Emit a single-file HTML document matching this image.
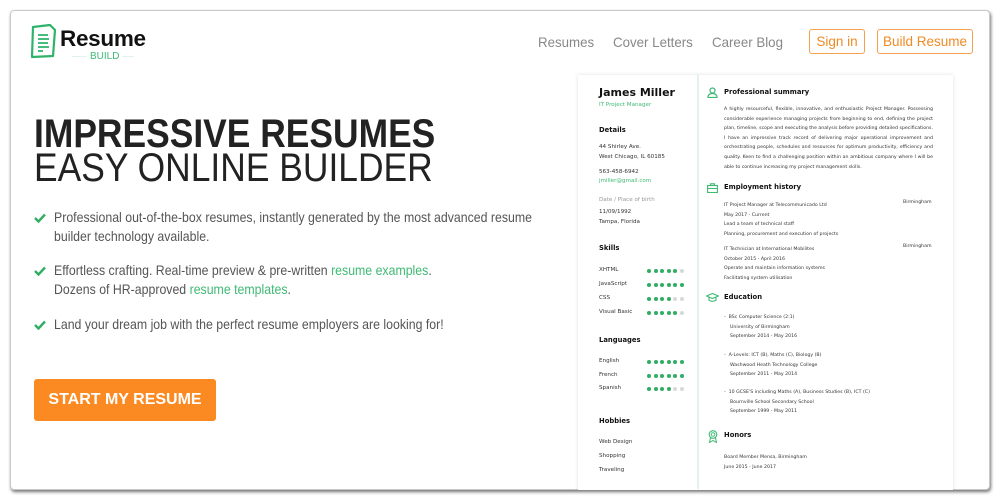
<!DOCTYPE html>
<html><head><meta charset="utf-8"><style>
*{margin:0;padding:0;box-sizing:border-box}
body{width:1000px;height:500px;background:#fff;position:relative;overflow:hidden;font-family:"Liberation Sans",sans-serif}
.card{position:absolute;left:10px;top:10px;width:980px;height:480px;border:1px solid #c8c8c8;border-radius:4px;box-shadow:1px 2px 3px rgba(0,0,0,.55);background:#fff;overflow:hidden}
.a{position:absolute;white-space:nowrap}
.nav{font-size:14px;color:#888;top:34px;transform:scaleX(.95);transform-origin:left}
.btn{position:absolute;border:1px solid #f5a04c;border-radius:3px;color:#f08a24;font-size:13.5px;text-align:center;line-height:23px;top:29px;height:25px}
.h{font-size:40px;color:#222;left:34px;transform:scaleX(.885);transform-origin:left}
.li{font-size:14px;color:#555;left:54px;line-height:19px;transform:scaleX(.88);transform-origin:left}
.li a{color:#3fba74;text-decoration:none}
.ck{position:absolute;left:34px;width:12px;height:10px}
.res{position:absolute;left:568px;top:65px;width:395px;height:425px;overflow:hidden}
.res .p{position:absolute;left:10px;top:10px;width:375px;height:430px;background:#fff;box-shadow:0 0 4px rgba(0,0,0,.12)}
.r{position:absolute;white-space:nowrap;font-family:"DejaVu Sans","Liberation Sans",sans-serif;color:#333;line-height:1}
.s{font-size:4.7px}
.m{font-size:5.6px}
.hd{font-size:6.8px;font-weight:bold;color:#111}
.g{color:#3fba74}
.dots{position:absolute;left:647px;display:flex;gap:2.5px}
.dots i{width:4px;height:4px;border-radius:50%;background:#2fae63;display:block}
.dots i.o{background:#d8d8d8}
</style></head><body>
<div class="card"></div>
<svg class="a" style="left:28px;top:23px" width="30" height="36" viewBox="0 0 30 36"><path d="M5 4 L22 2 L27 7 L25 33 L4 34 Z" fill="none" stroke="#2fb36a" stroke-width="2.2" stroke-linejoin="round"/><path d="M10 12h10M10 16h11M10 20h10M10 24h11M10 28h5" stroke="#2fb36a" stroke-width="1.8"/></svg>
<div class="a" style="left:60px;top:26px;font-size:22.5px;font-weight:bold;color:#111;letter-spacing:-.3px">Resume</div>
<div class="a" style="left:72px;top:56px;width:62px;border-top:1px solid #e3f3ea"></div>
<div class="a" style="left:87px;top:51px;font-size:10px;color:#3fba74;background:#fff;padding:0 3px">BUILD</div>
<div class="a nav" style="left:538px">Resumes</div>
<div class="a nav" style="left:613px">Cover Letters</div>
<div class="a nav" style="left:712px">Career Blog</div>
<div class="btn" style="left:809px;width:56px">Sign in</div>
<div class="btn" style="left:877px;width:96px">Build Resume</div>
<div class="a h" style="top:112px;font-weight:bold">IMPRESSIVE RESUMES</div>
<div class="a h" style="top:146px">EASY ONLINE BUILDER</div>
<svg class="ck" style="top:213px" viewBox="0 0 12 10"><path d="M1 5l3.5 3.5L11 1.5" fill="none" stroke="#2fae63" stroke-width="2.4"/></svg>
<div class="a li" style="top:208px">Professional out-of-the-box resumes, instantly generated by the most advanced resume<br>builder technology available.</div>
<svg class="ck" style="top:266px" viewBox="0 0 12 10"><path d="M1 5l3.5 3.5L11 1.5" fill="none" stroke="#2fae63" stroke-width="2.4"/></svg>
<div class="a li" style="top:261px">Effortless crafting. Real-time preview &amp; pre-written <a>resume examples</a>.<br>Dozens of HR-approved <a>resume templates</a>.</div>
<svg class="ck" style="top:320px" viewBox="0 0 12 10"><path d="M1 5l3.5 3.5L11 1.5" fill="none" stroke="#2fae63" stroke-width="2.4"/></svg>
<div class="a li" style="top:315px">Land your dream job with the perfect resume employers are looking for!</div>
<div class="a" style="left:34px;top:379px;width:182px;height:42px;background:#fa8a21;border-radius:3px;color:#fff;font-weight:bold;font-size:16px;text-align:center;line-height:42px">START MY RESUME</div>

<div class="res"><div class="p"></div></div>
<div class="a" style="left:697px;top:75px;width:1.5px;height:414px;background:#e2f3e9"></div>
<div class="r" style="left:599px;top:87px;font-size:11px;font-weight:bold;color:#111">James Miller</div>
<div class="r m g" style="left:599px;top:103px">IT Project Manager</div>
<div class="r hd" style="left:599px;top:127px">Details</div>
<div class="r m" style="left:599px;top:142px;line-height:10px">44 Shirley Ave.<br>West Chicago, IL 60185</div>
<div class="r m" style="left:599px;top:170px">563-458-6942</div>
<div class="r m g" style="left:599px;top:179px">jmiller@gmail.com</div>
<div class="r m" style="left:599px;top:198px;color:#999">Date / Place of birth</div>
<div class="r m" style="left:599px;top:207px;line-height:10px">11/09/1992<br>Tampa, Florida</div>
<div class="r hd" style="left:599px;top:245px">Skills</div>
<div class="r m" style="left:599px;top:268px">XHTML</div><div class="dots" style="top:269px"><i></i><i></i><i></i><i></i><i></i><i class="o"></i></div>
<div class="r m" style="left:599px;top:282px">JavaScript</div><div class="dots" style="top:283px"><i></i><i></i><i></i><i></i><i></i><i></i></div>
<div class="r m" style="left:599px;top:296px">CSS</div><div class="dots" style="top:297px"><i></i><i></i><i></i><i></i><i class="o"></i><i class="o"></i></div>
<div class="r m" style="left:599px;top:310px">Visual Basic</div><div class="dots" style="top:311px"><i></i><i></i><i></i><i></i><i></i><i class="o"></i></div>
<div class="r hd" style="left:599px;top:337px">Languages</div>
<div class="r m" style="left:599px;top:359px">English</div><div class="dots" style="top:360px"><i></i><i></i><i></i><i></i><i></i><i></i></div>
<div class="r m" style="left:599px;top:373px">French</div><div class="dots" style="top:374px"><i></i><i></i><i></i><i></i><i></i><i></i></div>
<div class="r m" style="left:599px;top:386px">Spanish</div><div class="dots" style="top:387px"><i></i><i></i><i></i><i></i><i class="o"></i><i class="o"></i></div>
<div class="r hd" style="left:599px;top:418px">Hobbies</div>
<div class="r m" style="left:599px;top:435px;line-height:14px">Web Design<br>Shopping<br>Traveling</div>

<svg class="a" style="left:707px;top:87px" width="11" height="11" viewBox="0 0 11 11"><circle cx="5.5" cy="3.5" r="2.5" fill="none" stroke="#3fba74" stroke-width="1.2"/><path d="M1 10.5c0-3 2-4 4.5-4s4.5 1 4.5 4z" fill="none" stroke="#3fba74" stroke-width="1.2"/></svg>
<div class="r hd" style="left:724px;top:89px">Professional summary</div>
<div class="r s" style="left:724px;top:105px;width:209px;white-space:normal;line-height:9.6px;text-align:justify">A highly resourceful, flexible, innovative, and enthusiastic Project Manager. Possessing considerable experience managing projects from beginning to end, defining the project plan, timeline, scope and executing the analysis before providing detailed specifications. I have an impressive track record of delivering major operational improvement and orchestrating people, schedules and resources for optimum productivity, efficiency and quality. Keen to find a challenging position within an ambitious company where I will be able to continue increasing my project management skills.</div>
<svg class="a" style="left:707px;top:183px" width="11" height="10" viewBox="0 0 11 10"><rect x=".6" y="2.5" width="9.8" height="7" fill="none" stroke="#3fba74" stroke-width="1.1"/><path d="M3.5 2.5V.8h4v1.7M.6 5.5h9.8" fill="none" stroke="#3fba74" stroke-width="1.1"/></svg>
<div class="r hd" style="left:724px;top:184px">Employment history</div>
<div class="r s" style="left:724px;top:201px;line-height:9.5px">IT Project Manager at Telecommunicado Ltd<br>May 2017 - Current<br>Lead a team of technical staff<br>Planning, procurement and execution of projects</div>
<div class="r s" style="left:903px;top:201px">Birmingham</div>
<div class="r s" style="left:724px;top:245px;line-height:9.5px">IT Technician at International Mobilites<br>October 2015 - April 2016<br>Operate and maintain information systems<br>Facilitating system utilisation</div>
<div class="r s" style="left:903px;top:245px">Birmingham</div>
<svg class="a" style="left:706px;top:293px" width="13" height="9" viewBox="0 0 13 9"><path d="M.5 3L6.5.5 12.5 3 6.5 5.5z M3 4.2v3c2 1.5 5 1.5 7 0v-3" fill="none" stroke="#3fba74" stroke-width="1.1"/></svg>
<div class="r hd" style="left:724px;top:294px">Education</div>
<div class="r s" style="left:724px;top:313px;line-height:9.5px">-&nbsp; BSc Computer Science (2:1)<br>&nbsp;&nbsp;&nbsp; University of Birmingham<br>&nbsp;&nbsp;&nbsp; September 2014 - May 2016</div>
<div class="r s" style="left:724px;top:351px;line-height:9.5px">-&nbsp; A-Levels: ICT (B), Maths (C), Biology (B)<br>&nbsp;&nbsp;&nbsp; Washwood Heath Technology College<br>&nbsp;&nbsp;&nbsp; September 2011 - May 2014</div>
<div class="r s" style="left:724px;top:388px;line-height:9.5px">-&nbsp; 10 GCSE'S including Maths (A), Business Studies (B), ICT (C)<br>&nbsp;&nbsp;&nbsp; Bournville School Secondary School<br>&nbsp;&nbsp;&nbsp; September 1999 - May 2011</div>
<svg class="a" style="left:708px;top:430px" width="10" height="13" viewBox="0 0 10 13"><circle cx="5" cy="4.5" r="3.8" fill="none" stroke="#3fba74" stroke-width="1.1"/><circle cx="5" cy="4.5" r="1.8" fill="none" stroke="#3fba74" stroke-width="1"/><path d="M2.5 7.5L1.5 12.5 5 10.5 8.5 12.5 7.5 7.5" fill="none" stroke="#3fba74" stroke-width="1"/></svg>
<div class="r hd" style="left:724px;top:432px">Honors</div>
<div class="r s" style="left:724px;top:453px;line-height:9.5px">Board Member Mensa, Birmingham<br>June 2015 - June 2017</div>
</body></html>
